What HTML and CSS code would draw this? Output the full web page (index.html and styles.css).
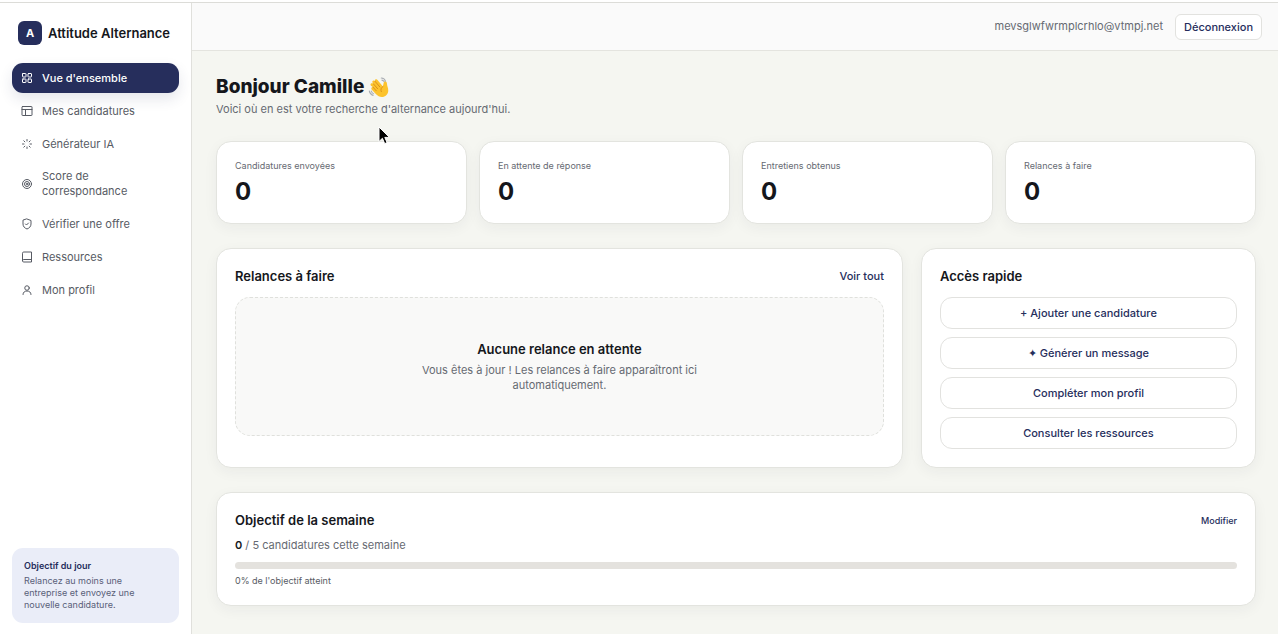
FILE: index.html
```
<!DOCTYPE html>
<html lang="fr">
<head>
    <meta charset="UTF-8">
    <meta name="viewport" content="width=device-width, initial-scale=1.0">
    <title>Attitude Alternance</title>
    <link rel="stylesheet" href="styles.css">
</head>
<body>

<aside class="sidebar">
    <a href="#" class="brand">
        <span class="brand-logo">A</span>
        <span class="brand-name">Attitude Alternance</span>
    </a>

    <nav class="nav">
        <a href="#" class="nav-link active">
            <svg class="icon" viewBox="0 0 24 24"><rect x="3" y="3" width="7" height="7" rx="1"/><rect x="14" y="3" width="7" height="7" rx="1"/><rect x="3" y="14" width="7" height="7" rx="1"/><rect x="14" y="14" width="7" height="7" rx="1"/></svg>
            Vue d'ensemble
        </a>
        <a href="#" class="nav-link">
            <svg class="icon" viewBox="0 0 24 24"><rect x="2" y="3" width="20" height="18" rx="1"/><path d="M2 9h20M9 9v12"/></svg>
            Mes candidatures
        </a>
        <a href="#" class="nav-link">
            <svg class="icon" viewBox="0 0 24 24"><path d="M12 3v3M12 18v3M3 12h3M18 12h3M5.600 5.600l2.100 2.100M16.300 16.300l2.100 2.100M5.600 18.400l2.100-2.100M16.300 7.700l2.100-2.100"/></svg>
            Générateur IA
        </a>
        <a href="#" class="nav-link">
            <svg class="icon" viewBox="0 0 24 24"><circle cx="12" cy="12" r="9"/><circle cx="12" cy="12" r="5"/><circle cx="12" cy="12" r="1.500"/></svg>
            Score de correspondance
        </a>
        <a href="#" class="nav-link">
            <svg class="icon" viewBox="0 0 24 24"><path d="M12 2l8 3v7c0 5-3.400 8.300-8 10-4.600-1.700-8-5-8-10V5z"/><path d="M9 12l2 2 4-4"/></svg>
            Vérifier une offre
        </a>
        <a href="#" class="nav-link">
            <svg class="icon" viewBox="0 0 24 24"><path d="M3 19.500V4.500A2.500 2.500 0 0 1 5.500 2H21v20H5.500a2.500 2.500 0 0 1 0-5H21"/></svg>
            Ressources
        </a>
        <a href="#" class="nav-link">
            <svg class="icon" viewBox="0 0 24 24"><circle cx="12" cy="8" r="4.500"/><path d="M4 21c0-4.500 3.500-7 8-7s8 2.500 8 7"/></svg>
            Mon profil
        </a>
    </nav>

    <div class="day-goal">
        <strong>Objectif du jour</strong>
        <p>Relancez au moins une entreprise et envoyez une nouvelle candidature.</p>
    </div>
</aside>

<div class="page">
    <header class="topbar">
        <span class="email">mevsglwfwrmplcrhlo@vtmpj.net</span>
        <button type="button" class="logout">Déconnexion</button>
    </header>

    <main class="content">
        <div class="welcome">
            <h1>Bonjour Camille
                <svg class="wave" viewBox="0 0 24 24" role="img" aria-label="Main qui salue">
                    <path d="M14.500 2.200c2.300.2 4 1.500 4.700 3.600M15.200 4.500c1.200.2 2 .9 2.500 1.900M1.400 16.300c.4 2.400 1.900 4.100 4.200 4.900M3.600 16.500c.5 1.500 1.300 2.400 2.600 3" fill="none" stroke="#a9adb3" stroke-width="1.200" stroke-linecap="round"/>
                    <path d="M3.200 8.300c.8-.8 1.800-.6 2.600.2l-.9-1.300c-.6-1 .1-2.200 1.200-2.300.6 0 1 .3 1.500.8-.4-1 .1-1.900 1-2.100.8-.2 1.400.2 2 .9l5.700 6.900.7-3.500c.2-1.300 1.200-2 2.300-1.700 1.100.3 1.400 1.200 1.400 2.300 0 2.300 1.500 4.300 1.400 7.500-.1 4-3.200 6.900-7 6.900-2.600 0-4.600-1.100-6.300-2.900l-4.600-5c-.7-.8-.8-1.700-.2-2.400.4-.4.900-.6 1.400-.5L3.200 10.700c-.6-.9-.6-1.700 0-2.400z" fill="#fcc32c"/>
                    <path d="M5.800 8.500l4.700 5.400M7.600 5.700l5.300 6.200M5.400 12.100l3.600 4M16.300 11.400c-2.200 1.400-2.800 3.600-1.800 5.700" fill="none" stroke="#d88d18" stroke-width="1" stroke-linecap="round"/>
                </svg>
            </h1>
            <p>Voici où en est votre recherche d'alternance aujourd'hui.</p>
        </div>

        <section class="stats">
            <div class="card stat"><span class="stat-label">Candidatures envoyées</span><span class="stat-value">0</span></div>
            <div class="card stat"><span class="stat-label">En attente de réponse</span><span class="stat-value">0</span></div>
            <div class="card stat"><span class="stat-label">Entretiens obtenus</span><span class="stat-value">0</span></div>
            <div class="card stat"><span class="stat-label">Relances à faire</span><span class="stat-value">0</span></div>
        </section>

        <div class="panels">
            <section class="card">
                <div class="card-header">
                    <h2>Relances à faire</h2>
                    <a href="#" class="see-all">Voir tout</a>
                </div>
                <div class="empty">
                    <h3>Aucune relance en attente</h3>
                    <p>Vous êtes à jour ! Les relances à faire apparaîtront ici automatiquement.</p>
                </div>
            </section>

            <section class="card">
                <div class="card-header">
                    <h2>Accès rapide</h2>
                </div>
                <div class="quick-links">
                    <a href="#" class="quick-link">+ Ajouter une candidature</a>
                    <a href="#" class="quick-link">✦ Générer un message</a>
                    <a href="#" class="quick-link">Compléter mon profil</a>
                    <a href="#" class="quick-link">Consulter les ressources</a>
                </div>
            </section>
        </div>

        <section class="card">
            <div class="card-header week-header">
                <h2>Objectif de la semaine</h2>
                <button type="button" class="edit">Modifier</button>
            </div>
            <p class="week-count"><strong>0</strong> / 5 candidatures cette semaine</p>
            <div class="progress"><div class="progress-bar" style="width: 0%"></div></div>
            <p class="week-percent">0% de l'objectif atteint</p>
        </section>
    </main>
</div>

<svg class="cursor" viewBox="0 0 12 19" aria-hidden="true"><path d="M1 1v14.500l3.400-3.200 2.300 5.300 2.400-1-2.300-5.200h4.700z" fill="#000" stroke="#fff" stroke-width="1"/></svg>

</body>
</html>
```
FILE: styles.css
```
* { box-sizing: border-box; margin: 0; padding: 0; }
html { padding-top: 2px; background-color: #fff; }
body { display: flex; min-height: calc(100vh - 2px); border-top: 1px solid #dcdcd8; font-family: Inter, "Liberation Sans", sans-serif; font-size: 11px; line-height: 15px; color: #15171c; background-color: #f5f6f1; }
a { color: inherit; text-decoration: none; }
button { font-family: inherit; cursor: pointer; }

/* Sidebar */
.sidebar { display: flex; flex-direction: column; flex: 0 0 192px; padding: 18px 12px 11px; background-color: #fff; border-right: 1px solid #e0e0dc; }
.brand { display: flex; align-items: center; gap: 6px; padding-left: 6px; margin-bottom: 18px; }
.brand-logo { display: flex; align-items: center; justify-content: center; width: 24px; height: 24px; border-radius: 6px; background-color: #262e5c; color: #fff; font-weight: 700; }
.brand-name { font-size: 13px; font-weight: 600; white-space: nowrap; }
.nav { display: flex; flex-direction: column; gap: 3px; }
.nav-link { display: flex; align-items: center; gap: 9px; min-height: 30px; padding: 7px 9px; border-radius: 11px; color: #575b64; }
.nav-link.active { background-color: #262e5c; color: #fff; font-weight: 500; box-shadow: 0 6px 14px rgba(38, 46, 92, 0.12); }
.icon { flex: none; width: 12px; height: 12px; fill: none; stroke: currentColor; stroke-width: 2; stroke-linecap: round; stroke-linejoin: round; }
.day-goal { margin-top: auto; padding: 12px; border-radius: 11px; background-color: #eaedf8; color: #596078; font-size: 9px; line-height: 12px; }
.day-goal strong { display: block; margin-bottom: 3px; color: #262e5c; font-weight: 600; }

/* Top bar */
.page { flex: 1; min-width: 0; }
.topbar { display: flex; align-items: center; justify-content: flex-end; gap: 12px; height: 48px; padding: 0 16px; background-color: #fafafa; border-bottom: 1px solid #e4e4df; }
.email { color: #666a72; }
.logout { height: 26px; padding: 0 8px; border: 1px solid #e2e2df; border-radius: 6px; background-color: #fff; color: #262e5c; font-size: 11px; font-weight: 500; }

/* Content */
.content { display: flex; flex-direction: column; gap: 24px; padding: 24px 22px 24px 24px; }
.welcome h1 { display: flex; align-items: center; gap: 4px; font-size: 19px; font-weight: 800; line-height: 24px; }
.welcome p { margin-top: 3px; color: #666a72; }
.wave { width: 22px; height: 22px; }
.card { padding: 18px; border: 1px solid #e3e4df; border-radius: 15px; background-color: #fff; box-shadow: 0 4px 14px rgba(30, 35, 50, 0.05); }
.stats { display: grid; grid-template-columns: repeat(4, 1fr); gap: 12px; }
.stat { display: flex; flex-direction: column; gap: 6px; }
.stat-label { color: #666a72; font-size: 9px; line-height: 12px; }
.stat-value { font-size: 24px; font-weight: 700; line-height: 27px; }
.panels { display: grid; grid-template-columns: 2.05fr 1fr; gap: 18px; }
.card-header { display: flex; align-items: center; justify-content: space-between; margin-bottom: 12px; }
.card-header h2 { font-size: 13px; font-weight: 600; line-height: 18px; }
.see-all { color: #262e5c; font-weight: 500; }
.empty { display: flex; flex-direction: column; align-items: center; gap: 5px; padding: 42px 24px; border: 1px dashed #dfe0dc; border-radius: 15px; background-color: #f9f9f8; text-align: center; }
.empty h3 { font-size: 13px; font-weight: 600; line-height: 18px; }
.empty p { max-width: 288px; color: #666a72; }
.quick-links { display: flex; flex-direction: column; gap: 8px; }
.quick-link { padding: 8px; border: 1px solid #e2e2df; border-radius: 12px; color: #262e5c; font-weight: 500; line-height: 14px; text-align: center; }

/* Weekly goal */
.week-header { margin-bottom: 9px; }
.edit { border: none; background: none; color: #262e5c; font-size: 9px; font-weight: 500; }
.week-count { color: #666a72; }
.week-count strong { color: #15171c; font-weight: 600; }
.progress { height: 7px; margin: 9px 0 6px; border-radius: 4px; background-color: #e4e2de; overflow: hidden; }
.progress-bar { height: 100%; background-color: #262e5c; }
.week-percent { color: #575b64; font-size: 9px; line-height: 12px; }

.cursor { position: absolute; left: 378px; top: 126px; width: 12px; height: 19px; }
```
